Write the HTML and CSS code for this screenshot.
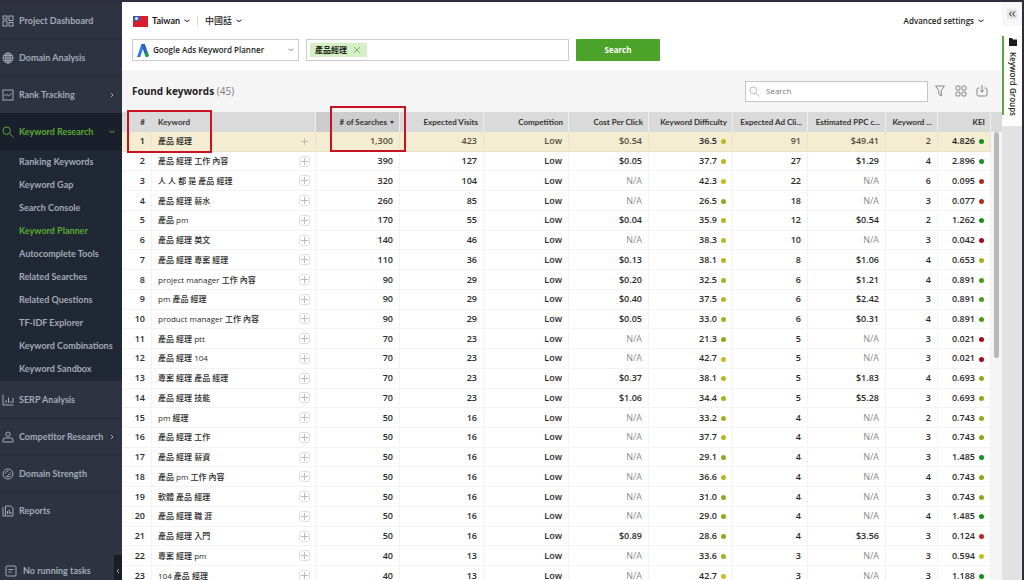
FILE: index.html
```html
<!DOCTYPE html>
<html lang="en">
<head>
<meta charset="utf-8">
<title>Keyword Planner</title>
<link rel="stylesheet" href="styles.css">
</head>
<body>
<div class="app">
  <nav class="sidebar" aria-label="Main">
    <a class="nav-item" href="#"><svg class="icon" viewBox="0 0 12 12"><rect x="1" y="1" width="4" height="3"/><rect x="7" y="1" width="4" height="4.500"/><rect x="1" y="6" width="4" height="5"/><rect x="7" y="7.500" width="4" height="3.500"/></svg>Project Dashboard</a>
    <a class="nav-item" href="#"><svg class="icon" viewBox="0 0 12 12"><circle cx="6" cy="6" r="5"/><ellipse cx="6" cy="6" rx="2.300" ry="5"/><path d="M1 6h10M1.700 3.600h8.600M1.700 8.400h8.600M6 1v10"/></svg>Domain Analysis</a>
    <a class="nav-item" href="#"><svg class="icon" viewBox="0 0 12 12"><rect x="1" y="1" width="10" height="10"/><path d="M2.500 7l2-2 2 2 3-2.500"/></svg>Rank Tracking<svg class="arrow" viewBox="0 0 6 6"><path d="M2 1l2 2-2 2"/></svg></a>
    <a class="nav-item nav-open" href="#"><svg class="icon" viewBox="0 0 12 12"><circle cx="4.700" cy="4.700" r="3.700"/><path d="M7.500 7.500l4 4"/></svg>Keyword Research<svg class="arrow" viewBox="0 0 6 6"><path d="M0.500 2q2.500 3 5 0"/></svg></a>
    <div class="subnav">
      <a href="#">Ranking Keywords</a>
      <a href="#">Keyword Gap</a>
      <a href="#">Search Console</a>
      <a class="current" href="#">Keyword Planner</a>
      <a href="#">Autocomplete Tools</a>
      <a href="#">Related Searches</a>
      <a href="#">Related Questions</a>
      <a href="#">TF-IDF Explorer</a>
      <a href="#">Keyword Combinations</a>
      <a href="#">Keyword Sandbox</a>
    </div>
    <a class="nav-item nav-first" href="#"><svg class="icon" viewBox="0 0 12 12"><path d="M1 0.500v10.500h10.500M4 9V6M6.500 9V3.500M9 9V7M11 9V4"/></svg>SERP Analysis</a>
    <a class="nav-item" href="#"><svg class="icon" viewBox="0 0 12 12"><circle cx="6" cy="3.200" r="2.200"/><path d="M1 11V9q0-2 2-2h6q2 0 2 2v2z"/></svg>Competitor Research<svg class="arrow" viewBox="0 0 6 6"><path d="M2 1l2 2-2 2"/></svg></a>
    <a class="nav-item" href="#"><svg class="icon" viewBox="0 0 12 12"><circle cx="6" cy="6" r="5"/><path d="M3 5.500Q4 3 6.500 3M5.500 7.500L9 4.500M9 6.500v1M4 8.500h4"/></svg>Domain Strength</a>
    <a class="nav-item" href="#"><svg class="icon" viewBox="0 0 12 12"><path d="M3.500 1H9l2 2v8H3.500zM1 2v9h2M5.500 9V6M7.300 9V4.500M9 9V7"/></svg>Reports</a>
    <div class="tasks">
      <svg class="icon" viewBox="0 0 12 12"><rect x="1" y="1" width="10" height="10" rx="1"/><path d="M3.500 4.500h5M3.500 7h3"/></svg>
      <span class="tasks-label">No running tasks</span>
      <button class="collapse" aria-label="Collapse menu"><svg class="arrow" viewBox="0 0 6 6"><path d="M4 1L2 3l2 2"/></svg></button>
    </div>
  </nav>

  <main class="content">
    <section class="query">
      <div class="locale">
        <button class="link-button country"><svg class="flag" viewBox="0 0 15 11"><rect width="15" height="11" fill="#d81e2c"/><rect width="7" height="5" fill="#3a55b5"/><circle cx="3.500" cy="2.500" r="1.500" fill="#fff"/></svg>Taiwan<svg class="arrow" viewBox="0 0 6 6"><path d="M0.500 2q2.500 3 5 0"/></svg></button>
        <span class="divider"></span>
        <button class="link-button language">中國話<svg class="arrow" viewBox="0 0 6 6"><path d="M0.500 2q2.500 3 5 0"/></svg></button>
        <button class="link-button advanced">Advanced settings<svg class="arrow" viewBox="0 0 6 6"><path d="M0.500 2q2.500 3 5 0"/></svg></button>
      </div>
      <div class="search-row">
        <label class="source">
          <svg class="ads" viewBox="0 0 12 13"><path d="M4.500 0h3L3.300 13H0z" fill="#2f7de0"/><path d="M4.500 0h3.200L12 11.500q-1.500 2.500-3.600 1z" fill="#1b9a4a"/><path d="M4.500 0h3.200l2.200 7-2.200 3z" fill="#2a62c9"/></svg>
          <select aria-label="Source"><option>Google Ads Keyword Planner</option></select>
          <svg class="arrow" viewBox="0 0 6 6"><path d="M0.500 2q2.500 3 5 0"/></svg>
        </label>
        <div class="terms">
          <span class="chip">產品經理<button class="chip-x" aria-label="Remove"><svg viewBox="0 0 8 8"><path d="M1 1l6 6M7 1L1 7"/></svg></button></span>
          <input class="terms-input" type="text" aria-label="Keywords">
        </div>
        <button class="search-button">Search</button>
      </div>
    </section>

    <section class="results">
      <header class="results-head">
        <h1>Found keywords <span>(45)</span></h1>
        <label class="filter">
          <svg class="lens" viewBox="0 0 12 12"><circle cx="4.700" cy="4.700" r="3.700"/><path d="M7.500 7.500l4 4"/></svg>
          <input type="text" placeholder="Search" aria-label="Search keywords">
        </label>
        <button class="tool" aria-label="Filter"><svg viewBox="0 0 12 12"><path d="M1.500 1h9L7.300 5.500V11L4.800 9V5.500z"/></svg></button>
        <button class="tool" aria-label="Columns"><svg viewBox="0 0 12 12"><rect x="1" y="1" width="4" height="4" rx="1"/><rect x="7" y="1" width="4" height="4" rx="1"/><rect x="1" y="7" width="4" height="4" rx="1"/><rect x="7" y="7" width="4" height="4" rx="1"/></svg></button>
        <button class="tool" aria-label="Download"><svg viewBox="0 0 12 12"><path d="M3.500 3H2.500Q1 3 1 4.500v5Q1 11 2.500 11h7q1.500 0 1.500-1.500v-5Q11 3 9.500 3h-1M6 0v7M4 5.200l2 2 2-2"/></svg></button>
      </header>
      <div class="grid-wrap">
        <table class="grid">
          <colgroup><col class="c-num"><col><col class="c-searches"><col class="c-visits"><col class="c-comp"><col class="c-cpc"><col class="c-kd"><col class="c-ad"><col class="c-ppc"><col class="c-words"><col class="c-kei"></colgroup>
          <thead>
            <tr><th class="num">#</th><th class="word">Keyword</th><th class="sorted"># of Searches <span class="caret"></span></th><th>Expected Visits</th><th>Competition</th><th>Cost Per Click</th><th>Keyword Difficulty</th><th>Expected Ad Cli...</th><th>Estimated PPC c...</th><th>Keyword ...</th><th>KEI</th></tr>
          </thead>
          <tbody id="rows"></tbody>
        </table>
        <div class="track"><div class="thumb"></div></div>
        <div class="mark mark-keyword"></div>
        <div class="mark mark-searches"></div>
      </div>
    </section>
  </main>

  <aside class="rail">
    <div class="rail-top"><button class="rail-toggle" aria-label="Expand panel"><svg viewBox="0 0 8 8"><path d="M3.800 1.500L1.500 4l2.300 2.500M7 1.500L4.700 4 7 6.500"/></svg></button></div>
    <div class="rail-body">
      <button class="rail-tab"><svg class="folder" viewBox="0 0 8 8"><path d="M0 0h3l1 1.500h4V8H0z"/></svg><span>Keyword Groups</span></button>
    </div>
  </aside>
</div>
<script src="app.js"></script>
</body>
</html>
```

FILE: styles.css
```css
* { box-sizing: border-box; }

body {
  margin: 0;
  background: #2d3341;
  color: #1c1c1c;
  font: 500 9px/12px "Open Sans", "Noto Sans CJK TC", sans-serif;
}

button, input, select { font: inherit; color: inherit; }
button { padding: 0; border: 0; background: none; }
svg { display: block; flex: none; fill: none; stroke: currentColor; }

.app {
  display: flex;
  height: 100vh;
  overflow: hidden;
  padding: 2px 2px 0 0;
  background: #2f2d3d;
}

.arrow { width: 6px; height: 6px; }
.icon { width: 12px; height: 12px; }

/* Sidebar */
.sidebar {
  display: flex;
  flex-direction: column;
  flex: none;
  width: 122px;
  background: #2d3341;
  color: #a4aab6;
  font-family: Lato, sans-serif;
  font-weight: 700;
}
.nav-item {
  display: flex;
  align-items: center;
  gap: 5px;
  flex: none;
  height: 37px;
  padding: 0 7px 0 2px;
  border-top: 1px solid #262c39;
  color: inherit;
  text-decoration: none;
  white-space: nowrap;
}
.nav-item .arrow { margin-left: auto; }
.nav-open { background: #1a202b; color: #58ab31; border: 0; }
.nav-first { border-color: transparent; }
.subnav {
  display: flex;
  flex-direction: column;
  flex: none;
  padding: 0 0 1px 19px;
  background: #202735;
}
.subnav a {
  height: 23px;
  line-height: 23px;
  color: inherit;
  text-decoration: none;
  white-space: nowrap;
}
.subnav .current { color: #58ab31; }
.tasks {
  display: flex;
  align-items: center;
  gap: 6px;
  flex: none;
  height: 32px;
  margin: auto 0 -7px;
  padding-left: 5px;
}
.collapse {
  display: flex;
  align-items: center;
  align-self: stretch;
  justify-content: center;
  width: 8px;
  margin-left: auto;
  background: #191f2a;
}

/* Query bar */
.content {
  display: flex;
  flex-direction: column;
  flex: 1;
  min-width: 0;
  background: #fff;
}
.query { flex: none; height: 68px; padding: 12px 18px 0 10px; font-size: 8px; font-weight: 600; }
.locale { display: flex; align-items: center; gap: 7px; height: 14px; }
.link-button { display: flex; align-items: center; gap: 4px; }
.country { padding-left: 1px; font-family: Lato, sans-serif; font-size: 9px; font-weight: 700; }
.language { font-size: 9px; font-weight: 500; }
.flag { width: 15px; height: 11px; stroke: none; }
.divider { width: 1px; height: 10px; background: #ddd; }
.advanced { margin-left: auto; }
.search-row { display: flex; gap: 7px; height: 22px; margin-top: 11px; }
.source {
  display: flex;
  align-items: center;
  gap: 4px;
  width: 167px;
  padding: 0 4px;
  border: 1px solid #ccc;
}
.source select { flex: 1; min-width: 0; padding: 0; border: 0; background: none; appearance: none; }
.source .arrow { color: #888; }
.ads { width: 12px; height: 13px; stroke: none; }
.terms {
  display: flex;
  align-items: center;
  flex: 0 1 263px;
  padding: 0 3px;
  border: 1px solid #ccc;
}
.chip {
  display: flex;
  align-items: center;
  gap: 6px;
  flex: none;
  height: 14px;
  padding: 0 6px 0 5px;
  background: #d5f0c4;
}
.chip-x svg { width: 8px; height: 8px; color: #8aa57c; }
.terms-input { flex: 1; min-width: 0; border: 0; padding: 0 4px; background: none; }
.search-button {
  width: 84px;
  border-radius: 1px;
  background: #4ca32a;
  color: #fff;
  font-size: 8px;
  font-weight: 700;
}

/* Results */
.results { display: flex; flex-direction: column; flex: 1; min-height: 0; }
.results-head {
  display: flex;
  align-items: center;
  flex: none;
  height: 42px;
  padding: 0 14px 0 10px;
  background: #f5f5f5;
}
h1 { margin: 0 auto 0 0; font-size: 10px; font-weight: 700; }
h1 span { color: #777; font-weight: 400; }
.filter {
  display: flex;
  align-items: center;
  gap: 6px;
  width: 183px;
  height: 21px;
  margin-right: 6px;
  padding: 0 3px;
  border: 1px solid #c4c4c4;
  background: #fff;
  font-size: 8px;
}
.filter input { flex: 1; min-width: 0; padding: 0; border: 0; }
.filter input::placeholder { color: #777; }
.lens { width: 11px; height: 11px; color: #b5b5b5; }
.tool { margin-left: 9px; color: #858585; }
.tool:first-of-type { margin-left: 0; }
.tool svg { width: 12px; height: 12px; }

/* Keyword table */
.grid-wrap {
  position: relative;
  display: flex;
  align-items: flex-start;
  flex: 1;
  min-height: 0;
}
.grid {
  flex: 1;
  width: 100%;
  height: 474px;
  table-layout: fixed;
  border-collapse: separate;
  border-spacing: 0;
}
.c-num { width: 30px; }
.c-searches { width: 84px; }
.c-visits { width: 84px; }
.c-comp { width: 85px; }
.c-cpc { width: 80px; }
.c-kd { width: 84px; }
.c-ad { width: 75px; }
.c-ppc { width: 78px; }
.c-words { width: 52px; }
.c-kei { width: 53px; }
.grid th, .grid td {
  padding: 0 6px 0 0;
  border-right: 1px solid #f3f3f3;
  text-align: right;
  white-space: nowrap;
  line-height: 10px;
}
.grid th {
  height: 20px;
  padding-right: 5px;
  border-color: #eee;
  background: #dadada;
  color: #333;
  font-family: Lato, sans-serif;
  font-size: 8px;
  font-weight: 700;
}
.grid td { border-bottom: 1px solid #f3f3f3; color: #2a2a2a; font-weight: 600; }
.grid .num { padding-right: 6px; }
.grid th.num { border-right-color: transparent; }
.grid .word { padding: 0 5px 0 6px; text-align: left; }
.grid td.word { font-size: 8px; font-weight: 500; }
.grid .sorted { padding-right: 5px; background: #cdcdcd; }
.grid .rated { padding-right: 6px; }
.caret {
  display: inline-block;
  margin-left: 1px;
  border: 2px solid transparent;
  border-top: 3px solid #333;
  border-bottom: 0;
  vertical-align: middle;
}
.grid .na { color: #8a8a8a; font-weight: 400; }
.grid .active td { background: #f4edd2; border-color: #ece4c8; color: #554f3b; }
.grid .active .num, .grid .active .word, .grid .active .rated { color: #222; }
.word-cell { display: flex; align-items: center; justify-content: space-between; }
.plus {
  display: flex;
  align-items: center;
  justify-content: center;
  width: 11px;
  height: 11px;
  border: 1px solid #e0e0e0;
  border-radius: 3px;
  color: #bbb;
}
.plus svg { width: 7px; height: 7px; }
.active .plus { border-color: transparent; }
.dot {
  display: inline-block;
  width: 5px;
  height: 5px;
  margin-left: 4px;
  border-radius: 50%;
  vertical-align: middle;
}
.green { background: #18921a; }
.leaf { background: #479a1c; }
.olive { background: #8fa91f; }
.lime { background: #a2b322; }
.mustard { background: #b8b824; }
.yellow { background: #cbb926; }
.red { background: #b52a1e; }
.crimson { background: #9e1016; }

.track { flex: none; width: 11px; height: 100%; padding-left: 3px; background: #f5f5f5; border-top: 20px solid #dadada; }
.thumb { width: 5px; height: 226px; border-radius: 3px; background: #b8b8b8; }

.mark { position: absolute; border: 2px solid #c81420; }
.mark-keyword { top: -2px; left: 5px; width: 85px; height: 43px; }
.mark-searches { top: -6px; left: 208px; width: 76px; height: 46px; }

/* Right rail */
.rail { flex: none; width: 20px; background: #e2e2e2; font-size: 8px; font-weight: 600; }
.rail-top { display: flex; justify-content: center; height: 24px; padding-top: 7px; background: #f7f7f7; }
.rail-toggle { display: flex; align-items: center; justify-content: center; width: 10px; height: 10px; background: #e6e6e6; }
.rail-toggle svg { width: 8px; height: 8px; }
.rail-body { padding: 10px 0 11px; background: #fff; }
.rail-tab {
  display: flex;
  flex-direction: column;
  align-items: center;
  gap: 6px;
  width: 100%;
  height: 79px;
  padding-top: 2px;
  border-left: 2px solid #5aa83a;
}
.rail-tab span { writing-mode: vertical-rl; white-space: nowrap; }
.folder { width: 8px; height: 8px; fill: #1c1c1c; stroke: none; }
```

FILE: app.js
```js
// keyword, searches, visits, CPC, difficulty, ad clicks, PPC cost, words, KEI
const rows = [
  ["產品 經理", "1,300", 423, "$0.54", "36.5", 91, "$49.41", 2, "4.826"],
  ["產品 經理 工作 內容", 390, 127, "$0.05", "37.7", 27, "$1.29", 4, "2.896"],
  ["人 人 都 是 產品 經理", 320, 104, "N/A", "42.3", 22, "N/A", 6, "0.095"],
  ["產品 經理 薪水", 260, 85, "N/A", "26.5", 18, "N/A", 3, "0.077"],
  ["產品 pm", 170, 55, "$0.04", "35.9", 12, "$0.54", 2, "1.262"],
  ["產品 經理 英文", 140, 46, "N/A", "38.3", 10, "N/A", 3, "0.042"],
  ["產品 經理 專案 經理", 110, 36, "$0.13", "38.1", 8, "$1.06", 4, "0.653"],
  ["project manager 工作 內容", 90, 29, "$0.20", "32.5", 6, "$1.21", 4, "0.891"],
  ["pm 產品 經理", 90, 29, "$0.40", "37.5", 6, "$2.42", 3, "0.891"],
  ["product manager 工作 內容", 90, 29, "$0.05", "33.0", 6, "$0.31", 4, "0.891"],
  ["產品 經理 ptt", 70, 23, "N/A", "21.3", 5, "N/A", 3, "0.021"],
  ["產品 經理 104", 70, 23, "N/A", "42.7", 5, "N/A", 3, "0.021"],
  ["專案 經理 產品 經理", 70, 23, "$0.37", "38.1", 5, "$1.83", 4, "0.693"],
  ["產品 經理 技能", 70, 23, "$1.06", "34.4", 5, "$5.28", 3, "0.693"],
  ["pm 經理", 50, 16, "N/A", "33.2", 4, "N/A", 2, "0.743"],
  ["產品 經理 工作", 50, 16, "N/A", "37.7", 4, "N/A", 3, "0.743"],
  ["產品 經理 薪資", 50, 16, "N/A", "29.1", 4, "N/A", 3, "1.485"],
  ["產品 pm 工作 內容", 50, 16, "N/A", "36.6", 4, "N/A", 4, "0.743"],
  ["軟體 產品 經理", 50, 16, "N/A", "31.0", 4, "N/A", 3, "0.743"],
  ["產品 經理 職 涯", 50, 16, "N/A", "29.0", 4, "N/A", 4, "1.485"],
  ["產品 經理 入門", 50, 16, "$0.89", "28.6", 4, "$3.56", 3, "0.124"],
  ["專案 經理 pm", 40, 13, "N/A", "33.6", 3, "N/A", 3, "0.594"],
  ["104 產品 經理", 40, 13, "N/A", "42.7", 3, "N/A", 3, "1.188"]
];

const difficultyTone = v => v > 41 ? "yellow" : v > 35 ? "mustard" : v > 32 ? "lime" : "olive";
const keiTone = v => v > 1 ? "green" : v > 0.8 ? "leaf" : v > 0.66 ? "olive" : v > 0.6 ? "lime" : v > 0.3 ? "yellow" : v > 0.05 ? "red" : "crimson";
const cell = v => `<td${v === "N/A" ? ' class="na"' : ""}>${v}</td>`;
const rated = (v, tone) => `<td class="rated">${v}<span class="dot ${tone}"></span></td>`;
const plus = '<button class="plus" aria-label="Add keyword"><svg viewBox="0 0 7 7"><path d="M3.500 0v7M0 3.500h7"/></svg></button>';

document.getElementById("rows").innerHTML = rows.map(([word, searches, visits, cpc, kd, ads, ppc, words, kei], i) =>
  `<tr${i === 0 ? ' class="active"' : ""}><td class="num">${i + 1}</td>` +
  `<td class="word"><div class="word-cell"><span>${word}</span>${plus}</div></td>` +
  cell(searches) + cell(visits) + cell("Low") + cell(cpc) + rated(kd, difficultyTone(+kd)) +
  cell(ads) + cell(ppc) + cell(words) + rated(kei, keiTone(+kei)) + "</tr>"
).join("");
```
